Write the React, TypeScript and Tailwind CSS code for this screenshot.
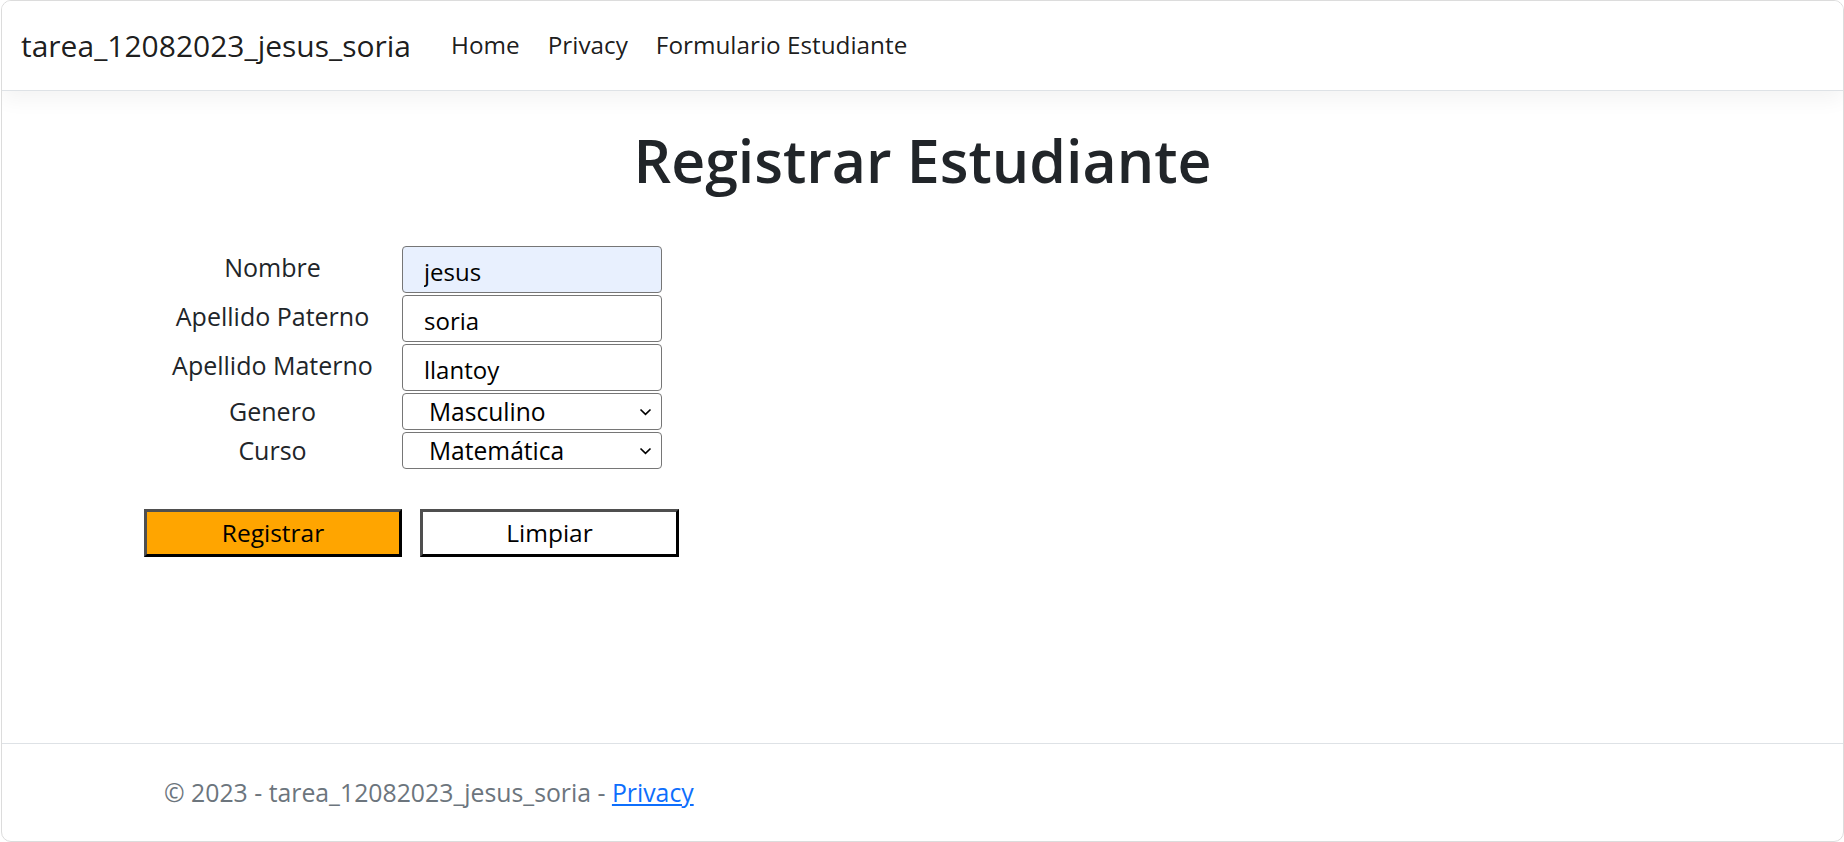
import { useState } from "react"

const NAV_LINKS = ["Home", "Privacy", "Formulario Estudiante"]

const TEXT_FIELDS = [
  { label: "Nombre", value: "jesus", autofill: true },
  { label: "Apellido Paterno", value: "soria", autofill: false },
  { label: "Apellido Materno", value: "llantoy", autofill: false },
]

const SELECT_FIELDS = [
  { label: "Genero", options: ["Masculino", "Femenino"] },
  { label: "Curso", options: ["Matemática", "Comunicación", "Ciencias"] },
]

function Chevron() {
  return (
    <svg width="13" height="8" viewBox="0 0 13 8" className="shrink-0">
      <path d="M1.5 1.5 L6.5 6.3 L11.5 1.5" fill="none" stroke="#000" strokeWidth="1.7" />
    </svg>
  )
}

export default function App() {
  const [values, setValues] = useState(TEXT_FIELDS.map((f) => f.value))

  return (
    <div className="h-[842px] w-full bg-white font-['Open_Sans',sans-serif]">
      <div className="ml-[1px] flex h-full flex-col overflow-hidden rounded-[10px] border border-[#dcdcdc] bg-white">
        <header className="flex h-[90px] shrink-0 items-center border-b border-[#dee2e6] bg-white pl-[19px] shadow-[0_8px_20px_rgba(0,0,0,0.05)]">
          <span className="mr-[40px] text-[30px] leading-none text-[#000000e6]">
            tarea_12082023_jesus_soria
          </span>
          <nav className="flex gap-[28px]">
            {NAV_LINKS.map((link) => (
              <a key={link} className="text-[24.3px] leading-none text-[#000000e6]">
                {link}
              </a>
            ))}
          </nav>
        </header>

        <main className="flex-1 pt-[33px]">
          <h1 className="text-center text-[59px] font-semibold leading-[72px] text-[#212529]">
            Registrar Estudiante
          </h1>

          <form className="mt-[50px] pl-[141px]" onSubmit={(e) => e.preventDefault()}>
            <div className="grid grid-cols-[259px_260px] gap-y-[2px] text-[25px] text-[#212529]">
              {TEXT_FIELDS.map((field, i) => (
                <div key={field.label} className="contents">
                  <label className="flex items-center justify-center pb-[5px] leading-none">
                    {field.label}
                  </label>
                  <input
                    value={values[i]}
                    onChange={(e) => {
                      const next = [...values]
                      next[i] = e.target.value
                      setValues(next)
                    }}
                    className={`h-[47px] w-full rounded-[4px] border-[1.5px] border-[#767676] pl-[21px] pt-[4px] text-[24px] text-black outline-none ${
                      field.autofill ? "bg-[#e8f0fe]" : "bg-white"
                    }`}
                  />
                </div>
              ))}
              {SELECT_FIELDS.map((field) => (
                <div key={field.label} className="contents">
                  <label className="flex items-center justify-center leading-none">
                    {field.label}
                  </label>
                  <div className="flex h-[37px] items-center rounded-[4px] border-[1.5px] border-[#767676] bg-white pr-[9px]">
                    <select className="h-full flex-1 appearance-none bg-transparent pl-[26px] text-[24.6px] text-black outline-none">
                      {field.options.map((opt) => (
                        <option key={opt}>{opt}</option>
                      ))}
                    </select>
                    <Chevron />
                  </div>
                </div>
              ))}
            </div>

            <div className="mt-[40px] flex gap-[18px] pl-[1px]">
              <button
                type="submit"
                className="h-[48px] w-[258px] border-[3px] border-t-[#4f4f4f] border-l-[#4f4f4f] border-b-black border-r-black bg-[#ffa500] text-[24.5px] text-black"
              >
                Registrar
              </button>
              <button
                type="button"
                onClick={() => setValues(["", "", ""])}
                className="h-[48px] w-[259px] border-[3px] border-t-[#4f4f4f] border-l-[#4f4f4f] border-b-black border-r-black bg-white text-[24.5px] text-black"
              >
                Limpiar
              </button>
            </div>
          </form>
        </main>

        <footer className="flex h-[98px] shrink-0 items-center border-t border-[#dee2e6] pl-[162px] text-[24.8px] text-[#6c757d]">
          © 2023 - tarea_12082023_jesus_soria -&nbsp;
          <a className="text-[#0d6efd] underline">Privacy</a>
        </footer>
      </div>
    </div>
  )
}
